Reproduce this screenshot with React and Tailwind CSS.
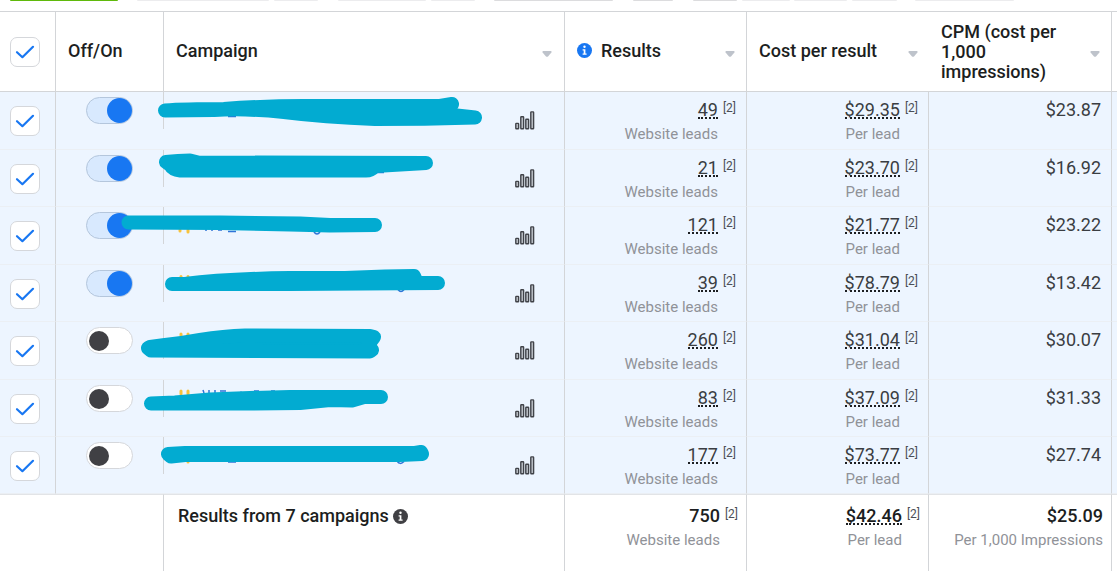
import React, { useState } from "react";

const campaigns = [
  {
    id: 1,
    on: true,
    results: "49",
    cost: "$29.35",
    cpm: "$23.87",
    height: "h-[58px]",
    mask: "M1 18.5 Q20 17 60 17 Q100 14 140 14 L276 14 L288 12 L270 21 L311 25.5 Q260 27 211 27 Q160 25 120 20 Q80 16 50 18 Z",
    link: "M64 24.5 H72",
    star: "",
  },
  {
    id: 2,
    on: true,
    results: "21",
    cost: "$23.70",
    cpm: "$16.92",
    height: "h-[57px]",
    mask: "M2 12 Q14 10.5 26 10.5 L34 12.5 L262 13 L211 16 Q207 20.5 202 20.5 L16 20.5 Q9 20 6 15 Z",
    link: "M212 22.5 H220",
    star: "",
  },
  {
    id: 3,
    on: true,
    results: "121",
    cost: "$21.77",
    cpm: "$23.22",
    height: "h-[58px]",
    mask: "M-35.5 15.5 L56 15.5 L136 16.5 L166 18 L211 18 L166 18.5 L126 17.5 L56 16 Z",
    link: "M42 22 V24 M48 22 V24 M54 23 H58 M64 24.5 H72 M150 25 Q153 29 156 25",
    star: "M16 23 V24 M24 23 V25",
  },
  {
    id: 4,
    on: true,
    results: "39",
    cost: "$78.79",
    cpm: "$13.42",
    height: "h-[57px]",
    mask: "M8 19 L21 19 Q60 14 126 13 L181 13 L221 11.5 L250 11 L253 18 L274 18 L126 19 Z",
    link: "M234 24.5 Q237 28.5 240 24.5",
    star: "M17 11.5 V13 M24 11.5 V13",
  },
  {
    id: 5,
    on: false,
    results: "260",
    cost: "$31.04",
    cpm: "$30.07",
    height: "h-[58px]",
    mask: "M-16 26 L-13 28.5 L206 29.5 L208 28 L204 23 L210 15 L206 14 L81 13.5 Q60 14 36 18 Q20 21 1 23 L-14 25 Z",
    link: "",
    star: "M17 12 V13.5 M24 12 V13",
  },
  {
    id: 6,
    on: false,
    results: "83",
    cost: "$37.09",
    cpm: "$31.33",
    height: "h-[57px]",
    mask: "M-13 23.5 L11 22.5 L46 19.5 L86 18 L126 17 L217 17 L200 17 L188 20.5 L166 20 L136 23 L86 23.5 Z",
    link: "M39 10 L40 13 M45 10 V13 M51 10 V13 M56 11 H62 M77 11.5 V12 M90 11 H95 M107 11 H111",
    star: "M17 11 V14 M24 11 V14",
  },
  {
    id: 7,
    on: false,
    results: "177",
    cost: "$73.77",
    cpm: "$27.74",
    height: "h-[57px]",
    mask: "M4 17 L21 16 L251 16 L257 15 L258 17 L236 18 L21 18 L7 19.5 Z",
    link: "M64 25 H72 M233 24 Q236 28.5 240 24.5",
    star: "M24 24 V25",
  },
];

// bottom edges of the toolbar buttons above the table
const toolbar = [
  "ml-[10px] w-[108px] bg-[#5fb90b]",
  "ml-[19px] w-[132px] bg-[#ececee]",
  "ml-[5px] w-[44px] bg-[#ececee]",
  "ml-[20px] w-[88px] bg-[#ececee]",
  "ml-[5px] w-[44px] bg-[#ececee]",
  "ml-[19px] w-[119px] bg-[#dcdcde]",
  "ml-[20px] w-[40px] bg-[#dcdcde]",
  "ml-[20px] w-[44px] bg-[#dcdcde]",
  "ml-[5px] w-[48px] bg-[#ececee]",
  "ml-[4px] w-[53px] bg-[#ececee]",
  "ml-[5px] w-[45px] bg-[#ececee]",
  "ml-[18px] w-[99px] bg-[#ececee]",
];

const Checkbox = ({ label, checked, onChange }) => (
  <span className="relative block size-[30px]">
    <input
      type="checkbox"
      aria-label={label}
      checked={checked}
      onChange={onChange}
      className="block size-[30px] appearance-none rounded-[7px] border border-[#d5d7db] bg-white"
    />
    {checked && (
      <svg
        viewBox="0 0 30 30"
        className="pointer-events-none absolute inset-0 size-[30px]"
        fill="none"
        stroke="#1877f2"
        strokeWidth="2.2"
        strokeLinecap="round"
        strokeLinejoin="round"
      >
        <path d="M7 15.2 L12.4 20.2 L23 9.8" />
      </svg>
    )}
  </span>
);

const Toggle = ({ label, on, onClick }) => (
  <button
    type="button"
    role="switch"
    aria-checked={on}
    aria-label={label}
    onClick={onClick}
    className={
      on
        ? "flex h-[27px] w-[47px] items-center justify-end rounded-full border border-[#b4c6dc] bg-[#d8e9fe]"
        : "flex h-[27px] w-[47px] items-center rounded-full border border-[#d5d7db] bg-white px-[2px]"
    }
  >
    <span
      className={
        on
          ? "size-[25px] rounded-full bg-[#1877f2]"
          : "size-[20px] rounded-full bg-[#404044]"
      }
    />
  </button>
);

const Info = ({ color }) => (
  <svg viewBox="0 0 15 15" className="size-[15px] shrink-0">
    <circle cx="7.5" cy="7.5" r="7.5" fill={color} />
    <circle cx="7.5" cy="3.8" r="1.2" fill="#fff" />
    <path d="M5.6 6.2 H8.4 V10.6 H9.6 V11.8 H5.6 V10.6 H6.7 V7.4 H5.6 Z" fill="#fff" />
  </svg>
);

const Bars = () => (
  <svg
    viewBox="0 0 20 19"
    className="h-[19px] w-[20px]"
    fill="#c4c9d0"
    stroke="#414349"
    strokeWidth="1.4"
  >
    <rect x="0.8" y="12.4" width="2.8" height="5.4" rx="0.5" />
    <rect x="5.8" y="5.8" width="2.8" height="12" rx="0.5" />
    <rect x="10.8" y="8.2" width="2.8" height="9.6" rx="0.5" />
    <rect x="15.8" y="0.9" width="2.8" height="16.9" rx="0.5" />
  </svg>
);

const SortButton = ({ label }) => (
  <button type="button" aria-label={label} className="mt-[4px] shrink-0">
    <svg viewBox="0 0 10 6" className="h-[6px] w-[10px]" fill="#bec3cb">
      <path d="M1 0 H9 Q10 0.6 9.4 1.6 L6 5.4 Q5 6.2 4 5.4 L0.6 1.6 Q0 0.6 1 0 Z" />
    </svg>
  </button>
);

const Metric = ({ value, note, dotted = true, footnote = true, bold = false }) => (
  <div className="flex justify-end gap-[5px]">
    <div className="text-right">
      <div
        className={
          bold
            ? "h-6 text-[18px] leading-6 font-medium text-[#1c1e21]"
            : "h-6 text-[18px] leading-6 text-[#3a3d42]"
        }
      >
        <span
          className={
            dotted
              ? "inline-block border-b-2 border-dotted border-[#1c1e21] leading-[14px]"
              : ""
          }
        >
          {value}
        </span>
      </div>
      {note && (
        <div className="text-[15px] leading-6 whitespace-nowrap text-[#909298]">
          {note}
        </div>
      )}
    </div>
    {footnote && (
      <span className="pt-[2px] text-[12px] leading-[16px] text-[#4b4f56]">[2]</span>
    )}
  </div>
);

const App = () => {
  const [rows, setRows] = useState(
    campaigns.map((item) => ({ ...item, checked: true }))
  );

  const allChecked = rows.every((row) => row.checked);

  const update = (id, changes) =>
    setRows(rows.map((row) => (row.id === id ? { ...row, ...changes } : row)));

  return (
    <main className="min-h-screen overflow-hidden bg-white font-[Roboto,sans-serif] text-[#1c1e21]">
      <div className="flex h-[11px] items-start overflow-hidden">
        {toolbar.map((style) => (
          <span key={style} className={`h-px shrink-0 rounded-b ${style}`} />
        ))}
      </div>
      <table className="w-full table-fixed border-separate border-spacing-0 border-t border-[#d3d5d8]">
        <colgroup>
          <col className="w-[56px]" />
          <col className="w-[108px]" />
          <col />
          <col className="w-[182px]" />
          <col className="w-[182px]" />
          <col className="w-[183px]" />
          <col className="w-[5px]" />
        </colgroup>
        <thead>
          <tr className="h-[80px] text-left text-[18px] leading-5 *:border-b *:border-[#d3d5d8] *:p-0 *:font-medium">
            <th className="border-r">
              <div className="pl-[10px]">
                <Checkbox
                  label="Select all campaigns"
                  checked={allChecked}
                  onChange={() =>
                    setRows(rows.map((row) => ({ ...row, checked: !allChecked })))
                  }
                />
              </div>
            </th>
            <th className="border-r">
              <div className="pb-[2px] pl-3">Off/On</div>
            </th>
            <th className="border-r">
              <div className="flex items-center justify-between pr-3 pl-3">
                <span className="pb-[2px]">Campaign</span>
                <SortButton label="Sort by campaign" />
              </div>
            </th>
            <th className="border-r">
              <div className="flex items-center pr-[11px] pl-3">
                <span className="pb-[3px]">
                  <Info color="#1877f2" />
                </span>
                <span className="flex-1 pb-[2px] pl-[9px]">Results</span>
                <SortButton label="Sort by results" />
              </div>
            </th>
            <th>
              <div className="flex items-center justify-between pr-[11px] pl-3">
                <span className="pb-[2px]">Cost per result</span>
                <SortButton label="Sort by cost per result" />
              </div>
            </th>
            <th className="border-r">
              <div className="flex items-center justify-between pr-[11px] pl-3">
                <span className="w-[120px]">CPM (cost per 1,000 impressions)</span>
                <SortButton label="Sort by CPM" />
              </div>
            </th>
            <th aria-hidden="true"></th>
          </tr>
        </thead>
        <tbody>
          {rows.map((row) => (
            <tr
              key={row.id}
              className={`${row.height} bg-[#edf5ff] *:border-b *:border-r-[#d3d5d8] *:border-b-[#ebeff4] *:p-0 *:align-top`}
            >
              <td className="border-r">
                <div className="pt-[14px] pl-[10px]">
                  <Checkbox
                    label={`Select campaign ${row.id}`}
                    checked={row.checked}
                    onChange={() => update(row.id, { checked: !row.checked })}
                  />
                </div>
              </td>
              <td>
                <div className="pt-[5px] pl-[30px]">
                  <Toggle
                    label={`Campaign ${row.id} off/on`}
                    on={row.on}
                    onClick={() => update(row.id, { on: !row.on })}
                  />
                </div>
              </td>
              <td className="border-r">
                <div className="relative flex justify-between pr-[29px]">
                  <div className="-ml-px h-[37px] w-px bg-[#d3d5d8]" />
                  <div className="pt-[19px]">
                    <Bars />
                  </div>
                  <svg
                    viewBox="0 0 400 57"
                    className="pointer-events-none absolute top-0 left-0 h-[57px] w-[400px] overflow-visible"
                    fill="none"
                  >
                    <path d={row.star} stroke="#f7c33c" strokeWidth="3" strokeLinecap="round" />
                    <path d={row.link} stroke="#2f74d8" strokeWidth="1.5" />
                    <path
                      d={row.mask}
                      fill="#02abd1"
                      stroke="#02abd1"
                      strokeWidth="14"
                      strokeLinecap="round"
                      strokeLinejoin="round"
                    />
                  </svg>
                </div>
              </td>
              <td className="border-r">
                <div className="pt-[6px] pr-[10px]">
                  <Metric value={row.results} note="Website leads" />
                </div>
              </td>
              <td className="border-r">
                <div className="pt-[6px] pr-[10px]">
                  <Metric value={row.cost} note="Per lead" />
                </div>
              </td>
              <td className="border-r">
                <div className="pt-[6px] pr-[10px]">
                  <Metric value={row.cpm} dotted={false} footnote={false} />
                </div>
              </td>
              <td></td>
            </tr>
          ))}
        </tbody>
        <tfoot>
          <tr className="h-[77px] *:border-t *:border-r-[#d3d5d8] *:border-t-[#e2e4e7] *:p-0 *:align-top">
            <td></td>
            <td className="border-r"></td>
            <td className="border-r">
              <div className="flex items-center gap-1 pt-[9px] pl-[14px] text-[18px] leading-6 font-medium">
                Results from 7 campaigns
                <Info color="#404044" />
              </div>
            </td>
            <td className="border-r">
              <div className="pt-[9px] pr-2">
                <Metric value="750" note="Website leads" dotted={false} bold />
              </div>
            </td>
            <td className="border-r">
              <div className="pt-[9px] pr-2">
                <Metric value="$42.46" note="Per lead" bold />
              </div>
            </td>
            <td className="border-r">
              <div className="pt-[9px] pr-2">
                <Metric
                  value="$25.09"
                  note="Per 1,000 Impressions"
                  dotted={false}
                  footnote={false}
                  bold
                />
              </div>
            </td>
            <td></td>
          </tr>
        </tfoot>
      </table>
    </main>
  );
};

export default App;
